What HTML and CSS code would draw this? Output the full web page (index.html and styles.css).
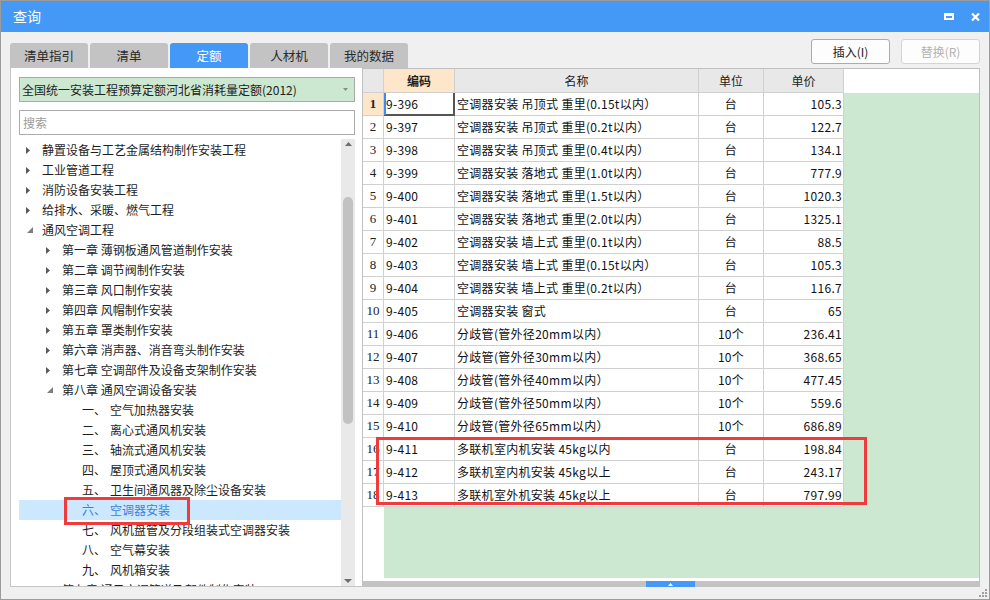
FILE: index.html
```html
<!DOCTYPE html>
<html lang="zh-CN">
<head>
<meta charset="utf-8">
<title>查询</title>
<link rel="stylesheet" href="styles.css">
</head>
<body>
<div class="window">
  <div class="titlebar">
    <span class="title">查询</span>
    <div class="win-btns">
      <svg width="10" height="7" viewBox="0 0 10 7"><path fill="#fff" fill-rule="evenodd" d="M0 0H10V7H0Z M2 3H8V5H2Z"/></svg>
      <svg width="9" height="8" viewBox="0 0 9 8"><path d="M1 0.5L8 7.5M8 0.5L1 7.5" stroke="#fff" stroke-width="2.2"/></svg>
    </div>
  </div>

  <div class="toolbar">
    <div class="tabs">
      <div class="tab">清单指引</div>
      <div class="tab">清单</div>
      <div class="tab active">定额</div>
      <div class="tab">人材机</div>
      <div class="tab">我的数据</div>
    </div>
    <div class="actions">
      <button class="btn">插入(I)</button>
      <button class="btn disabled">替换(R)</button>
    </div>
  </div>

  <div class="panels">
    <div class="left">
      <div class="select">
        <span>全国统一安装工程预算定额河北省消耗量定额(2012)</span>
        <svg width="5" height="3" viewBox="0 0 5 3"><polygon points="0,0 5,0 2.5,3" fill="#8a8a8a"/></svg>
      </div>
      <div class="search">搜索</div>
      <div class="tree">
        <div class="tree-list">
          <div class="node l0"><span class="tw"><svg class="cc" width="4" height="7" viewBox="0 0 4 7"><polygon points="0,0 4,3.5 0,7"/></svg></span>静置设备与工艺金属结构制作安装工程</div>
          <div class="node l0"><span class="tw"><svg class="cc" width="4" height="7" viewBox="0 0 4 7"><polygon points="0,0 4,3.5 0,7"/></svg></span>工业管道工程</div>
          <div class="node l0"><span class="tw"><svg class="cc" width="4" height="7" viewBox="0 0 4 7"><polygon points="0,0 4,3.5 0,7"/></svg></span>消防设备安装工程</div>
          <div class="node l0"><span class="tw"><svg class="cc" width="4" height="7" viewBox="0 0 4 7"><polygon points="0,0 4,3.5 0,7"/></svg></span>给排水、采暖、燃气工程</div>
          <div class="node l0"><span class="tw"><svg class="ce" width="6" height="6" viewBox="0 0 6 6"><polygon points="6,0 6,6 0,6"/></svg></span>通风空调工程</div>
          <div class="node l1"><span class="tw"><svg class="cc" width="4" height="7" viewBox="0 0 4 7"><polygon points="0,0 4,3.5 0,7"/></svg></span>第一章 薄钢板通风管道制作安装</div>
          <div class="node l1"><span class="tw"><svg class="cc" width="4" height="7" viewBox="0 0 4 7"><polygon points="0,0 4,3.5 0,7"/></svg></span>第二章 调节阀制作安装</div>
          <div class="node l1"><span class="tw"><svg class="cc" width="4" height="7" viewBox="0 0 4 7"><polygon points="0,0 4,3.5 0,7"/></svg></span>第三章 风口制作安装</div>
          <div class="node l1"><span class="tw"><svg class="cc" width="4" height="7" viewBox="0 0 4 7"><polygon points="0,0 4,3.5 0,7"/></svg></span>第四章 风帽制作安装</div>
          <div class="node l1"><span class="tw"><svg class="cc" width="4" height="7" viewBox="0 0 4 7"><polygon points="0,0 4,3.5 0,7"/></svg></span>第五章 罩类制作安装</div>
          <div class="node l1"><span class="tw"><svg class="cc" width="4" height="7" viewBox="0 0 4 7"><polygon points="0,0 4,3.5 0,7"/></svg></span>第六章 消声器、消音弯头制作安装</div>
          <div class="node l1"><span class="tw"><svg class="cc" width="4" height="7" viewBox="0 0 4 7"><polygon points="0,0 4,3.5 0,7"/></svg></span>第七章 空调部件及设备支架制作安装</div>
          <div class="node l1"><span class="tw"><svg class="ce" width="6" height="6" viewBox="0 0 6 6"><polygon points="6,0 6,6 0,6"/></svg></span>第八章 通风空调设备安装</div>
          <div class="node l2"><span class="tw"></span><span class="num">一、</span>空气加热器安装</div>
          <div class="node l2"><span class="tw"></span><span class="num">二、</span>离心式通风机安装</div>
          <div class="node l2"><span class="tw"></span><span class="num">三、</span>轴流式通风机安装</div>
          <div class="node l2"><span class="tw"></span><span class="num">四、</span>屋顶式通风机安装</div>
          <div class="node l2"><span class="tw"></span><span class="num">五、</span>卫生间通风器及除尘设备安装</div>
          <div class="node l2 selected"><span class="tw"></span><span class="num">六、</span>空调器安装</div>
          <div class="node l2"><span class="tw"></span><span class="num">七、</span>风机盘管及分段组装式空调器安装</div>
          <div class="node l2"><span class="tw"></span><span class="num">八、</span>空气幕安装</div>
          <div class="node l2"><span class="tw"></span><span class="num">九、</span>风机箱安装</div>
          <div class="node l1"><span class="tw"><svg class="cc" width="4" height="7" viewBox="0 0 4 7"><polygon points="0,0 4,3.5 0,7"/></svg></span>第九章 通风空调管道及部件制作安装</div>
        </div>
        <div class="vscroll">
          <svg class="up" width="7" height="4" viewBox="0 0 7 4"><polygon points="0,4 3.5,0 7,4" fill="#6e6e6e"/></svg>
          <div class="vthumb"></div>
          <svg class="down" width="8" height="4" viewBox="0 0 8 4"><polygon points="0,0 8,0 4,4" fill="#6e6e6e"/></svg>
        </div>
      </div>
    </div>

    <div class="right">
      <div class="sheet">
        <div class="grid">
          <div class="h"></div><div class="h key">编码</div><div class="h">名称</div><div class="h">单位</div><div class="h">单价</div>

          <div class="rn cur">1</div><div class="focus">9-396</div><div>空调器安装 吊顶式 重里(0.15t以内）</div><div class="c">台</div><div class="r">105.3</div>
          <div class="rn">2</div><div>9-397</div><div>空调器安装 吊顶式 重里(0.2t以内）</div><div class="c">台</div><div class="r">122.7</div>
          <div class="rn">3</div><div>9-398</div><div>空调器安装 吊顶式 重里(0.4t以内）</div><div class="c">台</div><div class="r">134.1</div>
          <div class="rn">4</div><div>9-399</div><div>空调器安装 落地式 重里(1.0t以内）</div><div class="c">台</div><div class="r">777.9</div>
          <div class="rn">5</div><div>9-400</div><div>空调器安装 落地式 重里(1.5t以内）</div><div class="c">台</div><div class="r">1020.3</div>
          <div class="rn">6</div><div>9-401</div><div>空调器安装 落地式 重里(2.0t以内）</div><div class="c">台</div><div class="r">1325.1</div>
          <div class="rn">7</div><div>9-402</div><div>空调器安装 墙上式 重里(0.1t以内）</div><div class="c">台</div><div class="r">88.5</div>
          <div class="rn">8</div><div>9-403</div><div>空调器安装 墙上式 重里(0.15t以内）</div><div class="c">台</div><div class="r">105.3</div>
          <div class="rn">9</div><div>9-404</div><div>空调器安装 墙上式 重里(0.2t以内）</div><div class="c">台</div><div class="r">116.7</div>
          <div class="rn">10</div><div>9-405</div><div>空调器安装 窗式</div><div class="c">台</div><div class="r">65</div>
          <div class="rn">11</div><div>9-406</div><div>分歧管(管外径20mm以内）</div><div class="c">10个</div><div class="r">236.41</div>
          <div class="rn">12</div><div>9-407</div><div>分歧管(管外径30mm以内）</div><div class="c">10个</div><div class="r">368.65</div>
          <div class="rn">13</div><div>9-408</div><div>分歧管(管外径40mm以内）</div><div class="c">10个</div><div class="r">477.45</div>
          <div class="rn">14</div><div>9-409</div><div>分歧管(管外径50mm以内）</div><div class="c">10个</div><div class="r">559.6</div>
          <div class="rn">15</div><div>9-410</div><div>分歧管(管外径65mm以内）</div><div class="c">10个</div><div class="r">686.89</div>
          <div class="rn">16</div><div>9-411</div><div>多联机室内机安装 45kg以内</div><div class="c">台</div><div class="r">198.84</div>
          <div class="rn">17</div><div>9-412</div><div>多联机室内机安装 45kg以上</div><div class="c">台</div><div class="r">243.17</div>
          <div class="rn">18</div><div>9-413</div><div>多联机室外机安装 45kg以上</div><div class="c">台</div><div class="r">797.99</div>
        </div>
      </div>
      <div class="hscroll">
        <div class="hthumb"><svg width="5" height="3" viewBox="0 0 5 3"><polygon points="0,3 2.5,0 5,3" fill="#fff"/></svg></div>
      </div>
    </div>
  </div>

  <div class="status">
    <svg width="9" height="9" viewBox="0 0 9 9" fill="#a0a0a0">
      <rect x="6" y="0" width="2" height="2"/>
      <rect x="3" y="3" width="2" height="2"/><rect x="6" y="3" width="2" height="2"/>
      <rect x="0" y="6" width="2" height="2"/><rect x="3" y="6" width="2" height="2"/><rect x="6" y="6" width="2" height="2"/>
    </svg>
  </div>

  <div class="mark mark-tree"></div>
  <div class="mark mark-table"></div>
</div>
</body>
</html>
```

FILE: styles.css
```css
* { box-sizing: border-box; }
html, body { margin: 0; padding: 0; }
body {
  width: 990px;
  height: 600px;
  overflow: hidden;
  font-family: "Noto Sans CJK SC", sans-serif;
  font-size: 12px;
  color: #222;
  background: #f0f0f0;
}

.window {
  position: relative;
  width: 990px;
  height: 600px;
  border: 1px solid #9c9c9c;
  background: #f0f0f0;
  display: flex;
  flex-direction: column;
}

/* title bar */
.titlebar {
  height: 31px;
  flex: none;
  background: #4499f7;
  color: #fff;
  display: flex;
  align-items: center;
  justify-content: space-between;
  padding: 0 9px 0 12px;
}
.title { font-size: 14px; line-height: 31px; }
.win-btns { display: flex; align-items: center; gap: 17px; }
.win-btns svg { display: block; }

/* toolbar: tabs + buttons */
.toolbar {
  height: 36px;
  flex: none;
  display: flex;
  justify-content: space-between;
  padding: 7px 9px 0 9px;
}
.tabs { display: flex; gap: 2px; align-self: flex-end; }
.tab {
  width: 78px;
  height: 25px;
  line-height: 25px;
  text-align: center;
  background: #c3c3c3;
  color: #2a2a2a;
  font-size: 12.5px;
  border-radius: 3px 3px 0 0;
}
.tab.active { background: #4499f7; color: #fff; }
.actions { display: flex; gap: 11px; align-self: flex-start; }
.btn {
  width: 79px;
  height: 25px;
  padding: 0;
  border: 1px solid #acacac;
  border-radius: 3px;
  background: #fdfdfd;
  font-family: inherit;
  font-size: 12px;
  line-height: 23px;
  color: #222;
}
.btn.disabled { border-color: #d4d4d4; color: #b2b2b2; }

/* panels */
.panels {
  height: 519px;
  flex: none;
  display: flex;
  padding: 0 9px;
}

.left {
  width: 352px;
  flex: none;
  background: #fff;
  border-left: 1px solid #c6c6c6;
  border-bottom: 1px solid #c6c6c6;
  padding: 9px 0 0 8px;
  display: flex;
  flex-direction: column;
}
.select {
  width: 336px;
  height: 25px;
  flex: none;
  border: 1px solid #a9a9a9;
  background: #cde8d1;
  display: flex;
  align-items: center;
  justify-content: space-between;
  padding: 0 6px 0 2px;
  white-space: nowrap;
}
.select svg { display: block; }
.search {
  width: 336px;
  height: 25px;
  flex: none;
  margin-top: 8px;
  border: 1px solid #ababab;
  color: #9b9b9b;
  padding-left: 3px;
  line-height: 23px;
}
.tree {
  width: 336px;
  height: 447px;
  flex: none;
  margin-top: 4px;
  display: flex;
  overflow: hidden;
}
.tree-list { flex: 1; padding-top: 1px; overflow: hidden; }
.node {
  height: 20px;
  line-height: 20px;
  white-space: nowrap;
  color: #1e1e1e;
}
.node.l0 { padding-left: 7px; }
.node.l1 { padding-left: 27px; }
.node.l2 { padding-left: 47px; }
.node.selected { background: #cce8ff; color: #3d7fda; }
.tw {
  display: inline-block;
  width: 16px;
  height: 20px;
  vertical-align: top;
}
.tw svg { display: block; margin-top: 7px; }
.tw .cc { fill: #595959; }
.tw .ce { fill: #7d7d7d; margin-left: 1px; }
.num { display: inline-block; width: 28px; }

.vscroll {
  width: 14px;
  flex: none;
  background: #e9e9e9;
  display: flex;
  flex-direction: column;
  align-items: center;
}
.vscroll svg { display: block; flex: none; }
.vscroll .up { margin-top: 3px; }
.vthumb {
  width: 10px;
  height: 227px;
  flex: none;
  margin-top: 51px;
  background: #c2c2c2;
  border-radius: 5px;
}
.vscroll .down { margin-top: auto; margin-bottom: 3px; }

.right {
  flex: 1;
  display: flex;
  flex-direction: column;
  background: #fff;
  border: 1px solid #c0c0c0;
  border-bottom: none;
}
.sheet {
  flex: 1;
  background:
    linear-gradient(#cde8d1, #cde8d1) no-repeat 21px 24px / calc(100% - 21px) calc(100% - 27px),
    #fff;
}
.grid {
  display: grid;
  grid-template-columns: 21px 71px 244px 65px 80px;
  width: 481px;
}
.grid > div {
  height: 23px;
  line-height: 22px;
  padding: 0 2px;
  border-right: 1px solid #d0d0d0;
  border-bottom: 1px solid #d0d0d0;
  background: #fff;
  white-space: nowrap;
  overflow: hidden;
  color: #111;
  letter-spacing: 0.3px;
}
.grid > .h {
  height: 24px;
  line-height: 23px;
  text-align: center;
  background: #e8e8e8;
  color: #222;
  letter-spacing: 0;
}
.grid > .h.key { background: #fde6c9; font-weight: bold; }
.grid > .rn {
  padding: 0;
  text-align: center;
  font-family: "Liberation Serif", serif;
  font-size: 13px;
  color: #222;
  letter-spacing: 0;
}
.grid > .rn.cur { background: #fde6c9; font-weight: bold; }
.grid > .c { text-align: center; }
.grid > .r { text-align: right; padding-right: 1px; }
.grid > .focus {
  border-right-color: #555;
  border-bottom-color: #555;
  box-shadow: inset 2px 0 0 #3b8df0, inset -1px -1px 0 #555;
}

.hscroll {
  height: 6px;
  flex: none;
  background: #c3c3c3;
  padding-left: 283px;
}
.hthumb {
  width: 49px;
  height: 6px;
  background: #4499f7;
  display: flex;
  align-items: center;
  justify-content: center;
}
.hthumb svg { display: block; }

.status {
  flex: 1;
  display: flex;
  justify-content: flex-end;
  align-items: flex-end;
  padding: 0 1px 1px 0;
}
.status svg { display: block; }

/* red annotation boxes */
.mark {
  position: absolute;
  border: 3px solid #ef3b3b;
  pointer-events: none;
}
.mark-tree { left: 63px; top: 496px; width: 126px; height: 28px; }
.mark-table { left: 375px; top: 436px; width: 491px; height: 68px; }
```
